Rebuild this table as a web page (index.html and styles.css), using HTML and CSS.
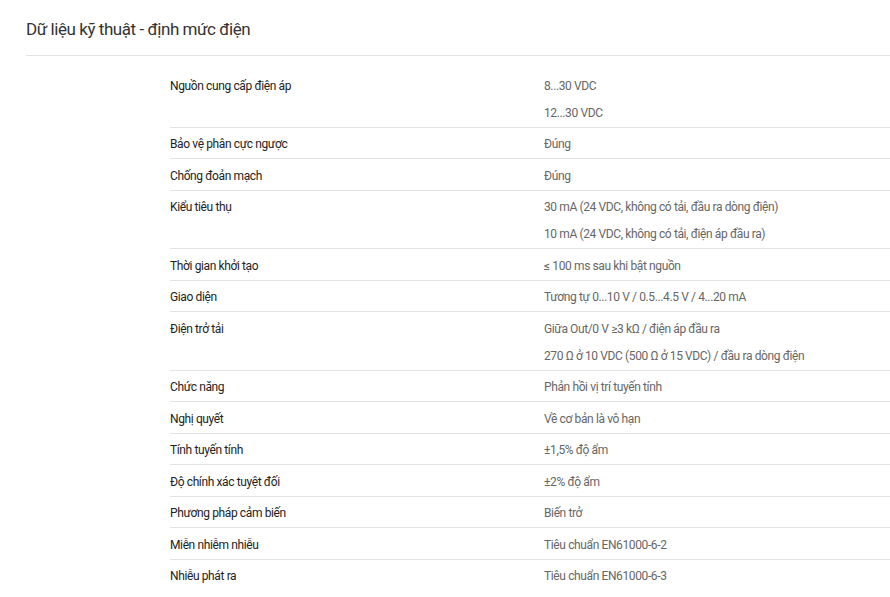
FILE: index.html
```html
<!DOCTYPE html>
<html lang="vi">
<head>
<meta charset="utf-8">
<title>Dữ liệu kỹ thuật</title>
<link rel="stylesheet" href="styles.css">
</head>
<body>
<section class="panel">
  <h2 class="title">Dữ liệu kỹ thuật - định mức điện</h2>
  <table class="specs">
    <tbody>
      <tr><td class="label">Nguồn cung cấp điện áp</td><td class="value"><div>8...30 VDC</div><div>12...30 VDC</div></td></tr>
      <tr><td class="label">Bảo vệ phân cực ngược</td><td class="value"><div>Đúng</div></td></tr>
      <tr><td class="label">Chống đoản mạch</td><td class="value"><div>Đúng</div></td></tr>
      <tr><td class="label">Kiểu tiêu thụ</td><td class="value"><div>30 mA (24 VDC, không có tải, đầu ra dòng điện)</div><div>10 mA (24 VDC, không có tải, điện áp đầu ra)</div></td></tr>
      <tr><td class="label">Thời gian khởi tạo</td><td class="value"><div>≤ 100 ms sau khi bật nguồn</div></td></tr>
      <tr><td class="label">Giao diện</td><td class="value"><div>Tương tự 0...10 V / 0.5...4.5 V / 4...20 mA</div></td></tr>
      <tr><td class="label">Điện trở tải</td><td class="value"><div>Giữa Out/0 V ≥3 kΩ / điện áp đầu ra</div><div>270 Ω ở 10 VDC (500 Ω ở 15 VDC) / đầu ra dòng điện</div></td></tr>
      <tr><td class="label">Chức năng</td><td class="value"><div>Phản hồi vị trí tuyến tính</div></td></tr>
      <tr><td class="label">Nghị quyết</td><td class="value"><div>Về cơ bản là vô hạn</div></td></tr>
      <tr><td class="label">Tính tuyến tính</td><td class="value"><div>±1,5% độ ẩm</div></td></tr>
      <tr><td class="label">Độ chính xác tuyệt đối</td><td class="value"><div>±2% độ ẩm</div></td></tr>
      <tr><td class="label">Phương pháp cảm biến</td><td class="value"><div>Biến trở</div></td></tr>
      <tr><td class="label">Miễn nhiễm nhiễu</td><td class="value"><div>Tiêu chuẩn EN61000-6-2</div></td></tr>
      <tr class="last"><td class="label">Nhiễu phát ra</td><td class="value"><div>Tiêu chuẩn EN61000-6-3</div></td></tr>
    </tbody>
  </table>
</section>
</body>
</html>
```

FILE: styles.css
```css
html, body {
  margin: 0;
  padding: 0;
  background: #fff;
  overflow: hidden;
}
body {
  font-family: Roboto, "Liberation Sans", Arial, sans-serif;
}
.panel {
  margin-left: 26px;
}
.title {
  margin: 0;
  padding: 17px 0 14px;
  font-size: 17px;
  line-height: 24px;
  letter-spacing: -0.44px;
  font-weight: 400;
  color: #333;
  border-bottom: 1px solid #e3e3e3;
}
.specs {
  margin: 13px 0 0 144px;
  width: 720px;
  border-collapse: collapse;
  font-size: 12px;
  letter-spacing: -0.38px;
}
.specs td {
  padding: 3.5px 0 0;
  vertical-align: top;
  line-height: 27px;
  border-bottom: 1px solid #e3e3e3;
}
.specs tr.last td {
  border-bottom: none;
}
.label {
  width: 374px;
  color: #222;
}
.value {
  color: #666;
}
```
